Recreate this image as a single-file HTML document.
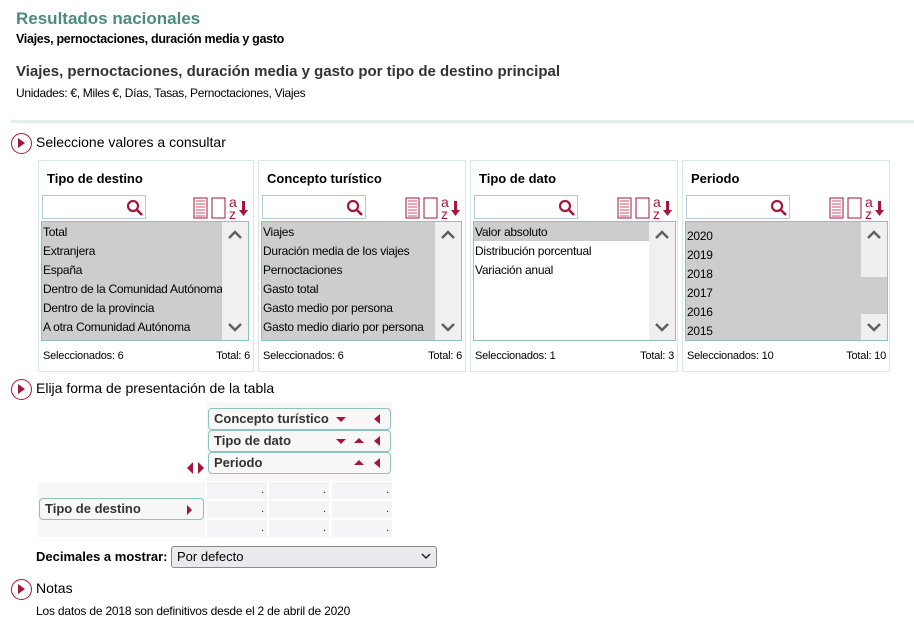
<!DOCTYPE html>
<html><head><meta charset="utf-8"><style>
*{margin:0;padding:0;box-sizing:border-box}
body{width:914px;height:612px;overflow:hidden;background:#fff;font-family:"Liberation Sans",Arial,sans-serif;color:#000;position:relative}
.a{position:absolute;white-space:nowrap}
.panel{position:absolute;top:160px;height:212px;border:1px solid #d6ebe6;background:#fff}
.ptitle{position:absolute;left:8px;top:10px;font-weight:bold;font-size:13px}
.search{position:absolute;left:3px;top:34px;width:104px;height:24px;border:1px solid #b8c6de;background:#fff}
.list{position:absolute;left:2px;top:60px;height:120px;border:1px solid #8cc3bc;background:#fff;overflow:hidden}
.item{position:absolute;left:1px;font-size:12px;height:19px;line-height:19px;letter-spacing:-0.25px}
.sb{position:absolute;right:0;top:0;width:26px;height:118px;background:#f0f0f0}
.foot{position:absolute;top:189px;font-size:11px;letter-spacing:-0.2px}
.arrow{position:absolute;left:11px;width:21px;height:21px;border:1.5px solid #a3173b;border-radius:50%}
.arrow:after{content:"";position:absolute;left:6px;top:4px;border-left:7px solid #a3173b;border-top:5px solid transparent;border-bottom:5px solid transparent}
.sec{position:absolute;left:36px;font-size:14px}
.dim{position:absolute;border:1px solid #8cc3bc;border-radius:4px;background:#f7f7f7;font-weight:bold;font-size:13px;color:#333;padding-left:5px;line-height:20px;height:22px}
.tri{position:absolute;width:0;height:0}
.cell{position:absolute;background:#f3f4f6;width:60px;height:17px;font-size:10px;text-align:right;padding-right:3px;line-height:17px}
</style></head><body>
<div class="a" style="left:16px;top:9px;font-size:17px;font-weight:bold;color:#4b8a7d">Resultados nacionales</div>
<div class="a" style="left:16px;top:32px;font-size:12.5px;font-weight:bold;letter-spacing:-0.3px">Viajes, pernoctaciones, duración media y gasto</div>
<div class="a" style="left:16px;top:63px;font-size:15px;font-weight:bold;color:#333">Viajes, pernoctaciones, duración media y gasto por tipo de destino principal</div>
<div class="a" style="left:16px;top:86px;font-size:12px;letter-spacing:-0.3px">Unidades:  €, Miles €, Días, Tasas, Pernoctaciones, Viajes</div>
<div class="a" style="left:11px;top:120px;width:903px;height:3px;background:#dcefea"></div>

<div class="arrow" style="top:133px"></div>
<div class="sec" style="top:134px">Seleccione valores a consultar</div>

<div class="panel" style="left:38px;width:216px">
 <div class="ptitle">Tipo de destino</div>
 <div class="search"><svg class="a" style="left:83px;top:3px" width="18" height="17"><circle cx="7" cy="7" r="5" fill="none" stroke="#a3173b" stroke-width="2.2"/><line x1="11" y1="11" x2="16" y2="16" stroke="#a3173b" stroke-width="2.6"/></svg></div>
 <svg class="a" style="left:154px;top:35px" width="60" height="24"><rect x="1" y="2" width="13" height="20" fill="#fff" stroke="#a3173b"/><g stroke="#c9506d"><line x1="3" y1="5" x2="12" y2="5"/><line x1="3" y1="8" x2="12" y2="8"/><line x1="3" y1="11" x2="12" y2="11"/><line x1="3" y1="14" x2="12" y2="14"/><line x1="3" y1="17" x2="12" y2="17"/><line x1="3" y1="20" x2="12" y2="20"/></g><rect x="19" y="2" width="13" height="20" fill="#fff" stroke="#a3173b"/><text x="36" y="11" font-size="14" fill="#a3173b" font-family="Liberation Sans">a</text><text x="36" y="23" font-size="14" fill="#a3173b" font-family="Liberation Sans">z</text><path d="M49 5h3v9h3l-4.5 6-4.5-6h3z" fill="#a3173b"/></svg>
 <div class="list" style="width:208px">
  <div class="a" style="left:0;top:0;width:180px;height:118px;background:#cdcdcd"></div>
  <div class="item" style="top:1px">Total</div><div class="item" style="top:20px">Extranjera</div><div class="item" style="top:39px">España</div><div class="item" style="top:58px">Dentro de la Comunidad Autónoma</div><div class="item" style="top:77px">Dentro de la provincia</div><div class="item" style="top:96px">A otra Comunidad Autónoma</div>
  <div class="sb"><svg class="a" style="left:6px;top:8px" width="14" height="10"><path d="M1 8l6-6 6 6" fill="none" stroke="#606060" stroke-width="2.5"/></svg><svg class="a" style="left:6px;top:100px" width="14" height="10"><path d="M1 2l6 6 6-6" fill="none" stroke="#606060" stroke-width="2.5"/></svg></div>
 </div>
 <div class="foot" style="left:4px">Seleccionados: 6</div><div class="foot" style="right:3px">Total: 6</div>
</div>

<div class="panel" style="left:258px;width:208px">
 <div class="ptitle">Concepto turístico</div>
 <div class="search"><svg class="a" style="left:83px;top:3px" width="18" height="17"><circle cx="7" cy="7" r="5" fill="none" stroke="#a3173b" stroke-width="2.2"/><line x1="11" y1="11" x2="16" y2="16" stroke="#a3173b" stroke-width="2.6"/></svg></div>
 <svg class="a" style="left:146px;top:35px" width="60" height="24"><rect x="1" y="2" width="13" height="20" fill="#fff" stroke="#a3173b"/><g stroke="#c9506d"><line x1="3" y1="5" x2="12" y2="5"/><line x1="3" y1="8" x2="12" y2="8"/><line x1="3" y1="11" x2="12" y2="11"/><line x1="3" y1="14" x2="12" y2="14"/><line x1="3" y1="17" x2="12" y2="17"/><line x1="3" y1="20" x2="12" y2="20"/></g><rect x="19" y="2" width="13" height="20" fill="#fff" stroke="#a3173b"/><text x="36" y="11" font-size="14" fill="#a3173b" font-family="Liberation Sans">a</text><text x="36" y="23" font-size="14" fill="#a3173b" font-family="Liberation Sans">z</text><path d="M49 5h3v9h3l-4.5 6-4.5-6h3z" fill="#a3173b"/></svg>
 <div class="list" style="width:201px">
  <div class="a" style="left:0;top:0;width:173px;height:118px;background:#cdcdcd"></div>
  <div class="item" style="top:1px">Viajes</div><div class="item" style="top:20px">Duración media de los viajes</div><div class="item" style="top:39px">Pernoctaciones</div><div class="item" style="top:58px">Gasto total</div><div class="item" style="top:77px">Gasto medio por persona</div><div class="item" style="top:96px">Gasto medio diario por persona</div>
  <div class="sb"><svg class="a" style="left:6px;top:8px" width="14" height="10"><path d="M1 8l6-6 6 6" fill="none" stroke="#606060" stroke-width="2.5"/></svg><svg class="a" style="left:6px;top:100px" width="14" height="10"><path d="M1 2l6 6 6-6" fill="none" stroke="#606060" stroke-width="2.5"/></svg></div>
 </div>
 <div class="foot" style="left:4px">Seleccionados: 6</div><div class="foot" style="right:3px">Total: 6</div>
</div>

<div class="panel" style="left:470px;width:208px">
 <div class="ptitle">Tipo de dato</div>
 <div class="search"><svg class="a" style="left:83px;top:3px" width="18" height="17"><circle cx="7" cy="7" r="5" fill="none" stroke="#a3173b" stroke-width="2.2"/><line x1="11" y1="11" x2="16" y2="16" stroke="#a3173b" stroke-width="2.6"/></svg></div>
 <svg class="a" style="left:146px;top:35px" width="60" height="24"><rect x="1" y="2" width="13" height="20" fill="#fff" stroke="#a3173b"/><g stroke="#c9506d"><line x1="3" y1="5" x2="12" y2="5"/><line x1="3" y1="8" x2="12" y2="8"/><line x1="3" y1="11" x2="12" y2="11"/><line x1="3" y1="14" x2="12" y2="14"/><line x1="3" y1="17" x2="12" y2="17"/><line x1="3" y1="20" x2="12" y2="20"/></g><rect x="19" y="2" width="13" height="20" fill="#fff" stroke="#a3173b"/><text x="36" y="11" font-size="14" fill="#a3173b" font-family="Liberation Sans">a</text><text x="36" y="23" font-size="14" fill="#a3173b" font-family="Liberation Sans">z</text><path d="M49 5h3v9h3l-4.5 6-4.5-6h3z" fill="#a3173b"/></svg>
 <div class="list" style="width:203px">
  <div class="a" style="left:0;top:0;width:175px;height:19px;background:#cdcdcd"></div>
  <div class="item" style="top:1px">Valor absoluto</div><div class="item" style="top:20px">Distribución porcentual</div><div class="item" style="top:39px">Variación anual</div>
  <div class="sb"><svg class="a" style="left:6px;top:8px" width="14" height="10"><path d="M1 8l6-6 6 6" fill="none" stroke="#606060" stroke-width="2.5"/></svg><svg class="a" style="left:6px;top:100px" width="14" height="10"><path d="M1 2l6 6 6-6" fill="none" stroke="#606060" stroke-width="2.5"/></svg></div>
 </div>
 <div class="foot" style="left:4px">Seleccionados: 1</div><div class="foot" style="right:3px">Total: 3</div>
</div>

<div class="panel" style="left:682px;width:208px">
 <div class="ptitle">Periodo</div>
 <div class="search"><svg class="a" style="left:83px;top:3px" width="18" height="17"><circle cx="7" cy="7" r="5" fill="none" stroke="#a3173b" stroke-width="2.2"/><line x1="11" y1="11" x2="16" y2="16" stroke="#a3173b" stroke-width="2.6"/></svg></div>
 <svg class="a" style="left:146px;top:35px" width="60" height="24"><rect x="1" y="2" width="13" height="20" fill="#fff" stroke="#a3173b"/><g stroke="#c9506d"><line x1="3" y1="5" x2="12" y2="5"/><line x1="3" y1="8" x2="12" y2="8"/><line x1="3" y1="11" x2="12" y2="11"/><line x1="3" y1="14" x2="12" y2="14"/><line x1="3" y1="17" x2="12" y2="17"/><line x1="3" y1="20" x2="12" y2="20"/></g><rect x="19" y="2" width="13" height="20" fill="#fff" stroke="#a3173b"/><text x="36" y="11" font-size="14" fill="#a3173b" font-family="Liberation Sans">a</text><text x="36" y="23" font-size="14" fill="#a3173b" font-family="Liberation Sans">z</text><path d="M49 5h3v9h3l-4.5 6-4.5-6h3z" fill="#a3173b"/></svg>
 <div class="list" style="width:203px;background:#cdcdcd">
  <div class="item" style="top:5px">2020</div><div class="item" style="top:24px">2019</div><div class="item" style="top:43px">2018</div><div class="item" style="top:62px">2017</div><div class="item" style="top:81px">2016</div><div class="item" style="top:100px">2015</div>
  <div class="sb" style="background:#cdcdcd"><div class="a" style="left:0;top:0;width:26px;height:55px;background:#efefef"></div><div class="a" style="left:0;top:92px;width:26px;height:26px;background:#efefef"></div><svg class="a" style="left:6px;top:8px" width="14" height="10"><path d="M1 8l6-6 6 6" fill="none" stroke="#606060" stroke-width="2.5"/></svg><svg class="a" style="left:6px;top:100px" width="14" height="10"><path d="M1 2l6 6 6-6" fill="none" stroke="#606060" stroke-width="2.5"/></svg></div>
 </div>
 <div class="foot" style="left:4px">Seleccionados: 10</div><div class="foot" style="right:3px">Total: 10</div>
</div>

<div class="arrow" style="top:379px"></div>
<div class="sec" style="top:380px">Elija forma de presentación de la tabla</div>

<div class="a" style="left:207px;top:402px;width:185px;height:79px;background:#f7f7f7"></div>
<div class="dim" style="left:208px;top:408px;width:183px">Concepto turístico</div>
<div class="dim" style="left:208px;top:430px;width:183px">Tipo de dato</div>
<div class="dim" style="left:208px;top:452px;width:183px">Periodo</div>
<div class="tri" style="left:336px;top:417px;border-top:5px solid #a3173b;border-left:5px solid transparent;border-right:5px solid transparent"></div>
<div class="tri" style="left:374px;top:414px;border-right:6px solid #a3173b;border-top:5px solid transparent;border-bottom:5px solid transparent"></div>
<div class="tri" style="left:336px;top:439px;border-top:5px solid #a3173b;border-left:5px solid transparent;border-right:5px solid transparent"></div>
<div class="tri" style="left:354px;top:438px;border-bottom:5px solid #a3173b;border-left:5px solid transparent;border-right:5px solid transparent"></div>
<div class="tri" style="left:374px;top:436px;border-right:6px solid #a3173b;border-top:5px solid transparent;border-bottom:5px solid transparent"></div>
<div class="tri" style="left:354px;top:460px;border-bottom:5px solid #a3173b;border-left:5px solid transparent;border-right:5px solid transparent"></div>
<div class="tri" style="left:374px;top:458px;border-right:6px solid #a3173b;border-top:5px solid transparent;border-bottom:5px solid transparent"></div>
<div class="tri" style="left:187px;top:462px;border-right:6px solid #a3173b;border-top:6px solid transparent;border-bottom:6px solid transparent"></div>
<div class="tri" style="left:198px;top:462px;border-left:6px solid #a3173b;border-top:6px solid transparent;border-bottom:6px solid transparent"></div>

<div class="a" style="left:38px;top:482px;width:167px;height:55px;background:#f7f7f7"></div>
<div class="dim" style="left:39px;top:498px;width:165px;height:22px">Tipo de destino</div>
<div class="tri" style="left:187px;top:505px;border-left:5px solid #a3173b;border-top:5px solid transparent;border-bottom:5px solid transparent"></div>
<div class="cell" style="left:207px;top:482px">.</div><div class="cell" style="left:269px;top:482px">.</div><div class="cell" style="left:332px;top:482px">.</div>
<div class="cell" style="left:207px;top:501px">.</div><div class="cell" style="left:269px;top:501px">.</div><div class="cell" style="left:332px;top:501px">.</div>
<div class="cell" style="left:207px;top:520px">.</div><div class="cell" style="left:269px;top:520px">.</div><div class="cell" style="left:332px;top:520px">.</div>

<div class="a" style="left:36px;top:549px;font-size:13px;font-weight:bold">Decimales a mostrar:</div>
<div class="a" style="left:171px;top:546px;width:266px;height:22px;border:1px solid #8a8a8a;border-radius:3px;background:#e9e9ee;font-size:13px;padding-left:5px;line-height:20px">Por defecto</div>
<svg class="a" style="left:421px;top:553px" width="10" height="7"><path d="M1 1l4 4 4-4" fill="none" stroke="#222" stroke-width="1.5"/></svg>

<div class="arrow" style="top:579px"></div>
<div class="sec" style="top:580px">Notas</div>
<div class="a" style="left:36px;top:604px;font-size:12px;letter-spacing:-0.2px">Los datos de 2018 son definitivos desde el 2 de abril de 2020</div>
</body></html>
